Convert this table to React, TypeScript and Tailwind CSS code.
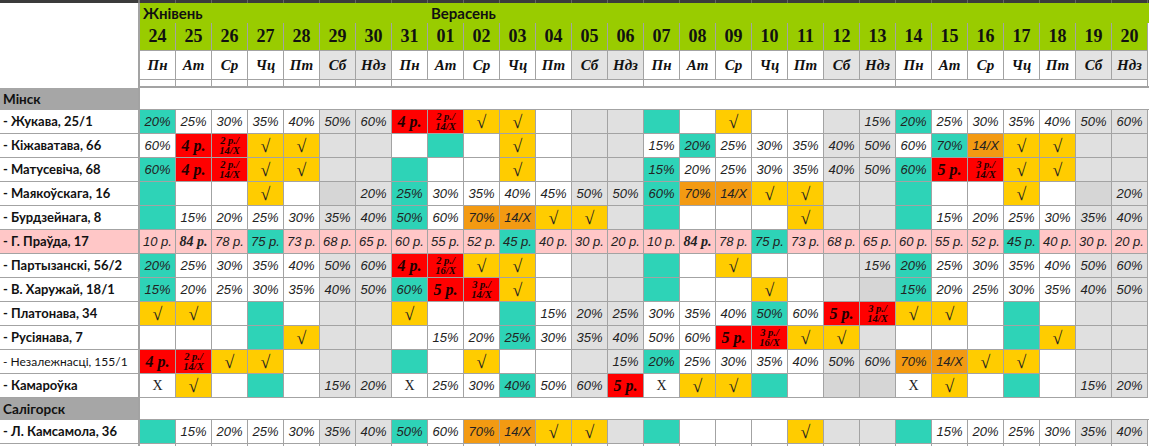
const DATES = ['24','25','26','27','28','29','30','31','01','02','03','04','05','06','07','08','09','10','11','12','13','14','15','16','17','18','19','20']
const DAYS = ['Пн','Ат','Ср','Чц','Пт','Сб','Ндз']
const WEEKEND = [5, 6, 12, 13, 19, 20, 26, 27]

const burdz = ['t','15%','20%','25%','30%','35%','40%','t50%','60%','o70%','o14/X','y√','y√','','t','','','','y√','','','t','15%','20%','25%','30%','35%','40%']

type Row = { label: string; cells: string[]; pink?: boolean; small?: boolean }

const minsk: Row[] = [
  { label: '- Жукава, 25/1', cells: ['t20%','25%','30%','35%','40%','50%','60%','r4 р.','r2 р./14/X','y√','y√','','','','t','','y√','','','','15%','t20%','25%','30%','35%','40%','50%','60%'] },
  { label: '- Кіжаватава, 66', cells: ['60%','r4 р.','r2 р./14/X','y√','y√','','','','t','','y√','','','','15%','t20%','25%','30%','35%','40%','50%','60%','t70%','o14/X','y√','y√','',''] },
  { label: '- Матусевіча, 68', cells: ['t60%','r4 р.','r2 р./14/X','y√','y√','','','t','','','y√','','','','t15%','20%','25%','30%','35%','40%','50%','t60%','r5 р.','r3 р./14/X','y√','y√','',''] },
  { label: '- Маякоўскага, 16', cells: ['t','','','y√','','d','20%','t25%','30%','35%','40%','45%','50%','50%','t60%','o70%','o14/X','y√','y√','','','t','','','y√','','d','20%'] },
  { label: '- Бурдзейнага, 8', cells: burdz },
  { label: '- Г. Праўда, 17', pink: true, cells: ['10 р.','84 р.','78 р.','t75 р.','73 р.','68 р.','65 р.','60 р.','55 р.','52 р.','t45 р.','40 р.','30 р.','20 р.','10 р.','84 р.','78 р.','t75 р.','73 р.','68 р.','65 р.','60 р.','55 р.','52 р.','t45 р.','40 р.','30 р.','20 р.'] },
  { label: '- Партызанскі, 56/2', cells: ['t20%','25%','30%','35%','40%','50%','60%','r4 р.','r2 р./16/X','y√','y√','','','','t','','y√','','','','15%','t20%','25%','30%','35%','40%','50%','60%'] },
  { label: '- В. Харужай, 18/1', cells: ['t15%','20%','25%','30%','35%','40%','50%','t60%','r5 р.','r3 р./14/X','y√','','','','t','','','y√','','','d','t15%','20%','25%','30%','35%','40%','50%'] },
  { label: '- Платонава, 34', cells: ['y√','y√','','t','','','','y√','','','t','15%','20%','25%','30%','35%','40%','t50%','60%','r5 р.','r3 р./14/X','y√','y√','','t','','',''] },
  { label: '- Русіянава, 7', cells: ['','','','t','y√','','','','15%','20%','t25%','30%','35%','40%','50%','60%','r5 р.','r3 р./16/X','y√','y√','','','','','t','y√','',''] },
  { label: '- Незалежнасці, 155/1', small: true, cells: ['r4 р.','r2 р./14/X','y√','y√','','','','t','','y√','','','','15%','t20%','25%','30%','35%','40%','50%','60%','o70%','o14/X','y√','y√','','',''] },
  { label: '- Камароўка', cells: ['X','y√','','t','','15%','20%','X','25%','30%','t40%','50%','60%','r5 р.','X','y√','y√','t','','d','d','X','y√','','t','','15%','20%'] },
]

const salihorsk: Row[] = [{ label: '- Л. Камсамола, 36', cells: burdz }]

const BG: Record<string, string> = {
  t: 'bg-[#2ed3b7]',
  y: 'bg-[#ffcc00]',
  r: 'bg-[#ff0000]',
  o: 'bg-[#f39a12]',
  d: 'bg-[#d6d6d6]',
}

const serif = "font-['Liberation_Serif',serif]"
const sans = "font-['Liberation_Sans',sans-serif]"
const label = "font-['Lato','Noto_Sans',sans-serif]"

function CellText({ text }: { text: string }) {
  if (!text) return null
  if (text === '√') return <span className={`${serif} text-[18px] leading-none text-[#222]`}>√</span>
  if (text === 'X') return <span className={`${serif} text-[14px] text-[#222]`}>X</span>
  if (text.includes('/X') && text.includes('р.')) {
    const [a, b, c] = text.split('/')
    return (
      <span className={`${serif} flex flex-col items-center text-[10.5px] font-bold italic leading-[10px] text-[#200]`}>
        <span>{a}/</span>
        <span>{b}/{c}</span>
      </span>
    )
  }
  if (text === '84 р.') return <span className={`${serif} text-[14px] font-bold italic text-[#222]`}>{text}</span>
  return <span className={`${sans} text-[13px] italic text-[#222]`}>{text}</span>
}

function Cell({ code, i, pink }: { code: string; i: number; pink?: boolean }) {
  const k = code.charAt(0)
  const hasBg = k in BG
  const text = hasBg ? code.slice(1) : code
  let bg = WEEKEND.includes(i) ? 'bg-[#e0e0e0]' : 'bg-white'
  if (pink) bg = 'bg-[#ffc7c7]'
  if (hasBg) bg = BG[k]
  const big = k === 'r' && !text.includes('/')
  return (
    <div className={`flex h-full w-[36px] items-center justify-center border-r border-b border-[#a3a3a3] ${bg}`}>
      {big ? (
        <span className={`${serif} text-[16px] font-bold italic text-[#200]`}>{text}</span>
      ) : (
        <CellText text={text} />
      )}
    </div>
  )
}

function DataRow({ row }: { row: Row }) {
  return (
    <div className="flex h-[24px]">
      <div
        className={`flex w-[140px] shrink-0 items-center whitespace-nowrap border-r-2 border-b border-[#a3a3a3] pl-[3px] ${label} text-[#111] ${
          row.pink ? 'bg-[#ffc7c7]' : 'bg-white'
        } ${row.small ? 'text-[12px]' : 'text-[13px] font-bold'}`}
      >
        {row.label}
      </div>
      {row.cells.map((c, i) => (
        <Cell key={i} code={c} i={i} pink={row.pink} />
      ))}
    </div>
  )
}

function Section({ name }: { name: string }) {
  return (
    <div className="flex h-[22px]">
      <div className={`flex w-[138px] shrink-0 items-center bg-[#a6a6a6] pl-[3px] ${label} text-[13.5px] font-bold text-[#111]`}>
        {name}
      </div>
      <div className="w-[2px] bg-[#a3a3a3]" />
      <div className="flex-1 border-b border-[#a3a3a3] bg-white" />
    </div>
  )
}

export default function App() {
  return (
    <div className="h-[446px] w-[1149px] overflow-hidden bg-white">
      {/* dark top strip */}
      <div className="flex h-[3px] bg-[#3b3b3b]">
        <div className="w-[140px] shrink-0 border-r-2 border-[#777]" />
        {DATES.map((d) => (
          <div key={d} className="w-[36px] border-r border-[#666]" />
        ))}
      </div>

      <div className="flex">
        <div className="w-[140px] shrink-0 border-r-2 border-[#a3a3a3] bg-white" />
        <div className="flex-1">
          {/* months */}
          <div className={`flex h-[20px] items-center bg-[#99cc00] ${label} text-[15px] font-bold text-[#111]`}>
            <div className="w-[288px] pl-[3px]">Жнівень</div>
            <div className="pl-[3px]">Верасень</div>
          </div>
          {/* dates */}
          <div className="flex h-[28px]">
            {DATES.map((d) => (
              <div
                key={d}
                className={`flex w-[36px] items-center justify-center border-r border-b border-[#a3a3a3] bg-[#99cc00] ${serif} text-[18px] font-bold text-[#111]`}
              >
                {d}
              </div>
            ))}
          </div>
          {/* weekdays */}
          <div className="flex h-[29px]">
            {DATES.map((d, i) => (
              <div
                key={d}
                className={`flex w-[36px] items-center justify-center border-r border-b border-[#a3a3a3] ${
                  WEEKEND.includes(i) ? 'bg-[#e3e3e3]' : 'bg-white'
                } ${serif} text-[15px] font-bold italic text-[#111]`}
              >
                {DAYS[i % 7]}
              </div>
            ))}
          </div>
          {/* spacer row */}
          <div className="flex h-[8px] border-b-2 border-[#a3a3a3]">
            {DATES.slice(0, 7).map((d) => (
              <div key={d} className="w-[36px] border-r border-[#a3a3a3]" />
            ))}
            <div className="w-[252px] border-r border-[#a3a3a3]" />
            <div className="w-[252px] border-r border-[#a3a3a3]" />
            <div className="w-[252px] border-r border-[#a3a3a3]" />
          </div>
        </div>
      </div>

      <Section name="Мінск" />
      {minsk.map((r) => (
        <DataRow key={r.label} row={r} />
      ))}
      <Section name="Салігорск" />
      {salihorsk.map((r) => (
        <DataRow key={r.label} row={r} />
      ))}
      <div className="flex h-[24px]">
        <div className="w-[140px] shrink-0 border-r-2 border-[#a3a3a3]" />
        {DATES.map((d) => (
          <div key={d} className="w-[36px] border-r border-[#a3a3a3]" />
        ))}
      </div>
    </div>
  )
}
